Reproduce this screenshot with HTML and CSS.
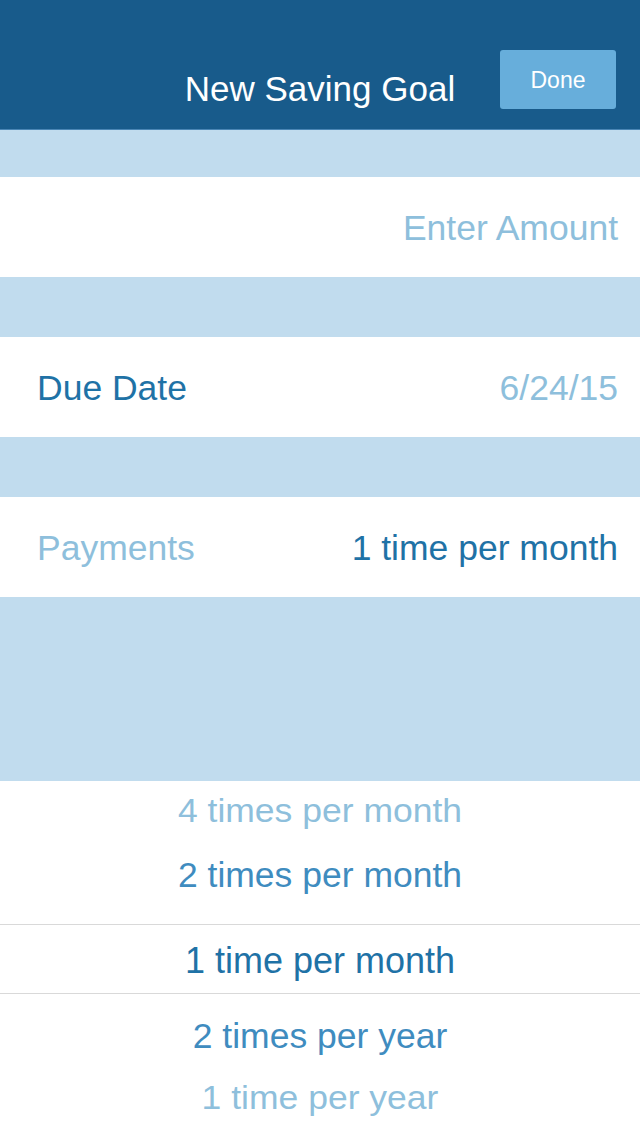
FILE: index.html
```html
<!DOCTYPE html>
<html>
<head>
<meta charset="utf-8">
<link rel="stylesheet" href="styles.css">
</head>
<body>
<div class="screen">
  <header class="navbar">
    <div class="title">New Saving Goal</div>
    <button class="done">Done</button>
  </header>
  <div class="band band-top"></div>
  <div class="row row-end"><span class="muted">Enter Amount</span></div>
  <div class="band"></div>
  <div class="row"><span class="strong">Due Date</span><span class="muted">6/24/15</span></div>
  <div class="band"></div>
  <div class="row"><span class="muted">Payments</span><span class="strong">1 time per month</span></div>
  <div class="band band-big"></div>
  <div class="picker">
    <div class="pitem far first">4 times per month</div>
    <div class="pitem near second">2 times per month</div>
    <div class="pitem selected">1 time per month</div>
    <div class="pitem near fourth">2 times per year</div>
    <div class="pitem far fifth">1 time per year</div>
  </div>
</div>
</body>
</html>
```
FILE: styles.css
```css
html, body {
  margin: 0;
  padding: 0;
  background: #ffffff;
}
body {
  font-family: "Liberation Sans", Arial, Helvetica, sans-serif;
}
.screen {
  width: 640px;
  height: 1136px;
  overflow: hidden;
  display: flex;
  flex-direction: column;
  background: #ffffff;
}
.navbar {
  position: relative;
  height: 129px;
  background: #185b8b;
  border-bottom: 1px solid #4a86b5;
  box-sizing: content-box;
  display: flex;
  justify-content: center;
  align-items: flex-start;
}
.title {
  color: #ffffff;
  font-size: 35px;
  line-height: 40px;
  margin-top: 69px;
}
.done {
  position: absolute;
  left: 500px;
  top: 50px;
  width: 116px;
  height: 59px;
  border: none;
  border-radius: 3px;
  background: #67aedb;
  color: #ffffff;
  font-family: "Liberation Sans", Arial, Helvetica, sans-serif;
  font-size: 23px;
  padding: 2px 0 0 0;
}
.band {
  height: 60px;
  background: #c1dcee;
  flex: none;
}
.band-top {
  height: 47px;
}
.band-big {
  height: 184px;
}
.row {
  height: 100px;
  flex: none;
  display: flex;
  align-items: center;
  justify-content: space-between;
  padding: 0 22px 0 37px;
  font-size: 35.5px;
  line-height: 40px;
}
.row-end {
  justify-content: flex-end;
}
.row span {
  padding-top: 2px;
}
.muted {
  color: #8ebfdc;
}
.strong {
  color: #1f72a6;
}
.picker {
  flex: 1;
  display: flex;
  flex-direction: column;
  font-size: 35.5px;
  text-align: center;
}
.pitem {
  height: 68px;
  line-height: 68px;
  white-space: nowrap;
}
.far {
  color: #8ebfdc;
  transform: scaleY(0.93);
}
.near {
  color: #3f8cbf;
  transform: scaleY(0.97);
}
.first {
  height: 60px;
  line-height: 60px;
}
.second {
  padding-bottom: 15px;
}
.selected {
  color: #1f72a6;
  font-size: 36px;
  height: 65px;
  line-height: 65px;
  padding-top: 3px;
  border-top: 1px solid #d9d9d9;
  border-bottom: 1px solid #d9d9d9;
}
.fourth {
  margin-top: 8px;
}
.fifth {
  height: 56px;
  line-height: 56px;
}
```
